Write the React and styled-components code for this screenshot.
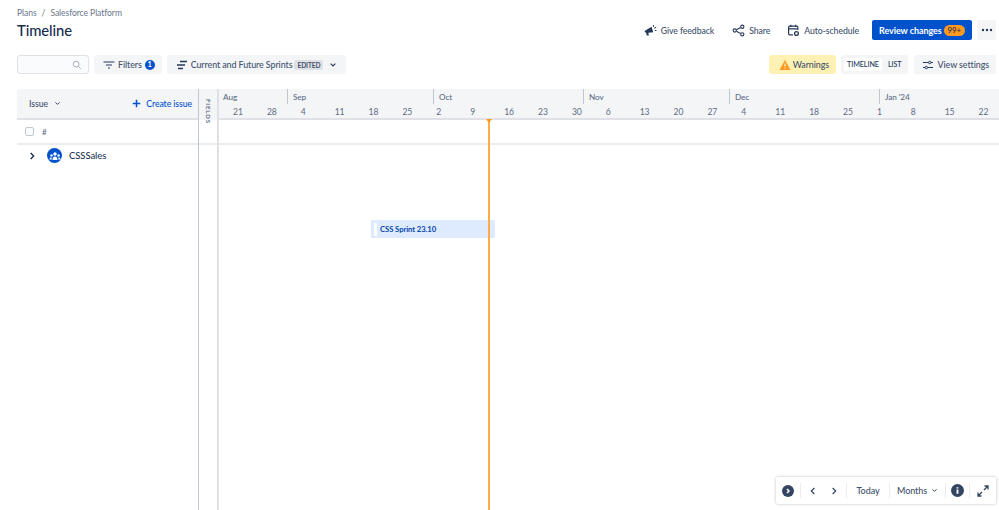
import React from 'react';
import styled, { createGlobalStyle } from 'styled-components';

const Global = createGlobalStyle`
  html, body { margin: 0; padding: 0; height: 100%; overflow: hidden; background: #fff; }
  body { font-family: Lato, "Open Sans", "Liberation Sans", sans-serif; color: #42526e; font-size: 12px; letter-spacing: -0.08px; }
  #root { height: 100%; }
  * { box-sizing: border-box; }
`;

const Page = styled.div`
  position: relative; width: 999px; height: 510px; overflow: hidden;
  display: flex; flex-direction: column; padding-left: 17px;
`;
const Header = styled.header`
  display: flex; justify-content: space-between; align-items: flex-start;
  height: 55px; padding: 7px 3px 0 0;
`;
const TitleBlock = styled.div`display: flex; flex-direction: column;`;
const Crumbs = styled.div`
  font-size: 8.6px; line-height: 13px; color: #6b778c; display: flex; gap: 5px;
`;
const Title = styled.h1`
  margin: 0; font-size: 14.8px; line-height: 21px; font-weight: 500; color: #172b4d;
`;
const Actions = styled.div`display: flex; align-items: center; gap: 5px; margin-top: 13px; height: 20px;`;
const LinkAction = styled.span`
  display: flex; align-items: center; gap: 4px; font-size: 8.7px; color: #42526e; font-weight: 500;
  margin-right: ${p => p.$mr || 0}px; white-space: nowrap;
`;
const Primary = styled.span`
  width: 100px; height: 20px; background: #0052cc; color: #fff; border-radius: 2px; font-size: 9px;
  font-weight: 700; display: flex; align-items: center; justify-content: center; gap: 2px; white-space: nowrap;
`;
const CountPill = styled.span`
  background: #ff991f; color: #172b4d; font-size: 7.8px; font-weight: 500; border-radius: 8px; padding: 0 4px; line-height: 11px;
`;
const MoreButton = styled.span`
  width: 19px; height: 20px; background: #f4f5f7; border-radius: 2px; display: flex; align-items: center; justify-content: center;
`;
const Toolbar = styled.div`
  display: flex; align-items: center; height: 19px; margin-bottom: 15px; padding-right: 3px;
`;
const Search = styled.div`
  width: 72px; height: 19px; border: 1.5px solid #dfe1e6; border-radius: 3px; background: #fafbfc;
  display: flex; align-items: center; justify-content: flex-end; padding-right: 6px; margin-right: 5px;
`;
const ToolButton = styled.span`
  display: flex; align-items: center; height: 19px; background: #f4f5f7; border-radius: 3px;
  font-size: 8.9px; font-weight: 500; color: #42526e; padding: ${p => p.$pad || '0 7px'}; white-space: nowrap;
  margin-right: ${p => p.$mr || 0}px; gap: ${p => p.$gap || 5}px;
`;
const Badge = styled.span`
  width: 10px; height: 10px; border-radius: 50%; background: #0052cc; color: #fff; font-size: 7.5px; font-weight: 700;
  display: flex; align-items: center; justify-content: center;
`;
const Lozenge = styled.span`
  background: #dfe1e6; font-size: 6.6px; font-weight: 700; padding: 0 3px; border-radius: 2px; line-height: 10px; color: #42526e; margin-left: -1px;
`;
const Spacer = styled.div`flex: 1;`;
const WarningButton = styled(ToolButton)`background: #fff0b3; color: #42526e;`;
const Segment = styled.div`
  display: flex; align-items: center; height: 19px; background: #f4f5f7; border-radius: 3px; padding: 0 3px; margin: 0 6px 0 5px;
`;
const SegmentItem = styled.span`
  font-size: 7.2px; font-weight: 500; color: #253858; padding: 0 3px; line-height: 13px;
  border-radius: 2px; background: ${p => p.$active ? '#fff' : 'transparent'}; margin-right: ${p => p.$active ? 3 : 0}px;
`;
const Grid = styled.div`
  flex: 1; display: grid; grid-template-columns: 181px 21px 1fr; grid-template-rows: 31px 25px 1fr; min-height: 0;
`;
const IssueHead = styled.div`
  background: #f4f5f7; border-bottom: 2px solid #dfe1e6; display: flex; align-items: center; padding: 0 6px 0 12px;
  border-radius: 3px 0 0 0; font-size: 8.7px; font-weight: 500;
`;
const IssueLabel = styled.span`display: flex; align-items: center; gap: 6px; flex: 1;`;
const CreateIssue = styled.span`display: flex; align-items: center; gap: 5px; color: #0052cc; font-weight: 500; font-size: 8.7px;`;
const FieldsRail = styled.div`
  grid-row: 1 / span 3; grid-column: 2; border-left: 1px solid #c1c7d0; border-right: 2px solid #dfe1e6;
  background: linear-gradient(#f4f5f7 31px, #fff 31px);
  display: flex; justify-content: center; padding-top: 10px; position: relative;
`;
const RailLabel = styled.span`
  writing-mode: vertical-rl; font-size: 6.2px; letter-spacing: 0.8px; color: #5e6c84; font-weight: 700; line-height: 8px; height: 22px;
`;
const RailRule = styled.div`
  position: absolute; left: 0; right: 0; top: 54px; height: 2px; background: #ebecf0;
`;
const TimelineHead = styled.div`
  background: #f4f5f7; border-bottom: 2px solid #dfe1e6; display: flex; flex-direction: column; overflow: hidden;
`;
const MonthRow = styled.div`display: flex; height: 18px;`;
const Month = styled.div`
  width: ${p => p.$w}px; flex: none; height: 15px; font-size: 8.2px; line-height: 16px; padding-left: ${p => p.$first ? 4 : 5}px; color: #5e6c84;
  border-left: ${p => p.$first ? 'none' : '1px solid #c1c7d0'}; font-weight: 500;
`;
const WeekRow = styled.div`display: flex; padding-left: 14px; height: 11px;`;
const Week = styled.div`
  width: 33.9px; flex: none; font-size: 8.6px; line-height: 11px; color: #5e6c84;
`;
const SubHead = styled.div`
  border-bottom: 2px solid #ebecf0; display: flex; align-items: center; padding-left: 8px; gap: 8px; color: #6b778c; font-size: 8px; font-weight: 600;
`;
const Check = styled.span`width: 9px; height: 9px; border: 1px solid #c1c7d0; border-radius: 2px; background: #fafbfc;`;
const SubHeadPlain = styled.div`border-bottom: 2px solid #ebecf0;`;
const IssueList = styled.div`padding: 2px 0 0 11px; display: flex; align-items: flex-start; grid-column: 1;`;
const ProjectRow = styled.div`display: flex; align-items: center; gap: 8px; font-size: 9.5px; font-weight: 500; color: #253858; height: 17px;`;
const ProjectDot = styled.span`
  width: 15px; height: 15px; border-radius: 50%; background: #0052cc; display: flex; align-items: center; justify-content: center; margin-left: 3px; margin-right: -1px;
`;
const Canvas = styled.div`position: relative;`;
const SprintBar = styled.div`
  position: absolute; left: 152px; top: 75px; width: 124px; height: 18px; background: #deebff; border-radius: 1px;
  display: flex; align-items: center; padding-left: 3px; gap: 3px; font-size: 7.7px; font-weight: 700; color: #0747a6;
`;
const BarHandle = styled.span`width: 3px; height: 13px; background: #fff; border-radius: 1px;`;
const TodayLine = styled.div`
  position: absolute; left: 488px; top: 119px; bottom: 0; width: 2px; background: #ffab4a;
  &::before { content: ''; position: absolute; left: -2px; top: 0; border: 3px solid transparent; border-top: 4px solid #ff991f; }
`;
const FloatBar = styled.div`
  position: absolute; left: 776px; top: 477px; width: 220px; height: 27px; background: #fff; border-radius: 2px;
  box-shadow: 0 0 3px rgba(9,30,66,.3); display: flex; align-items: center;
`;
const FloatItem = styled.div`
  height: 15px; width: ${p => p.$w}px; display: flex; align-items: center; justify-content: center; gap: ${p => p.$gap || 0}px; flex: none;
  border-right: ${p => p.$last ? 'none' : '1px solid #ebecf0'}; font-size: 9px; font-weight: 500; color: #42526e;
`;
const NavPair = styled(FloatItem)`justify-content: space-between; padding: 0 8px;`;
const Caret = styled.span`margin-left: 3px;`;

const Ic = ({ children, w = 12, h = 12 }) => (
  <svg width={w} height={h} viewBox="0 0 24 24" fill="none" style={{ flex: 'none', display: 'block' }}>{children}</svg>
);
const Megaphone = () => <Ic w={13} h={13}><path d="M1 13l13-8 3 10-9 1 1 5H5l-1-5-2-1z" fill="#253858"/><path d="M18 2l-1 3M22 6l-3 2M23 12h-3" stroke="#253858" strokeWidth="2"/></Ic>;
const ShareIc = () => <Ic w={13} h={13}><circle cx="5" cy="12" r="3" stroke="#253858" strokeWidth="2"/><circle cx="19" cy="5" r="3" stroke="#253858" strokeWidth="2"/><circle cx="19" cy="19" r="3" stroke="#253858" strokeWidth="2"/><path d="M8 10.500L16 6.500M8 13.500l8 4" stroke="#253858" strokeWidth="2"/></Ic>;
const CalGear = () => <Ic w={13} h={13}><path d="M11 20H5a2 2 0 0 1-2-2V6a2 2 0 0 1 2-2h13a2 2 0 0 1 2 2v5" stroke="#253858" strokeWidth="2.2"/><path d="M3 9h17M7 1.500v4M16 1.500v4" stroke="#253858" strokeWidth="2.2"/><circle cx="17.500" cy="17.500" r="3.500" stroke="#253858" strokeWidth="2.400"/></Ic>;
const Search2 = () => <Ic w={10} h={10}><circle cx="10" cy="10" r="7" stroke="#97a0af" strokeWidth="2"/><path d="M15 15l6 6" stroke="#97a0af" strokeWidth="2"/></Ic>;
const FilterIc = () => <Ic w={12} h={12}><path d="M1 6h22M6 12h12M10 18h4" stroke="#253858" strokeWidth="2"/></Ic>;
const RoadmapIc = () => <Ic w={12} h={12}><path d="M8 5h14M2 12h16M4 19h10" stroke="#253858" strokeWidth="3"/></Ic>;
const Chevron = ({ c = '#253858', s = 8 }) => <Ic w={s} h={s}><path d="M5 8l7 7 7-7" stroke={c} strokeWidth="3.400"/></Ic>;
const WarnIc = () => <Ic w={12} h={12}><path d="M12 2L23 22H1z" fill="#ff991f"/><path d="M12 9v6M12 17v2" stroke="#fff" strokeWidth="2"/></Ic>;
const SlidersIc = () => <Ic w={12} h={12}><path d="M2 7h11M18 7h4M2 17h4M11 17h11" stroke="#253858" strokeWidth="2"/><circle cx="15.500" cy="7" r="2.500" stroke="#253858" strokeWidth="2"/><circle cx="8.500" cy="17" r="2.500" stroke="#253858" strokeWidth="2"/></Ic>;
const Plus = () => <Ic w={9} h={9}><path d="M12 2v20M2 12h20" stroke="#0052cc" strokeWidth="4"/></Ic>;
const ChevRight = ({ s = 8, c = '#172b4d', w = 4 }) => <Ic w={s} h={s}><path d="M8 3l9 9-9 9" stroke={c} strokeWidth={w}/></Ic>;
const ChevLeft = () => <Ic w={8} h={8}><path d="M16 3l-9 9 9 9" stroke="#344563" strokeWidth="3.600"/></Ic>;
const Team = () => <Ic w={12} h={12}><circle cx="12" cy="8" r="3.500" fill="#fff"/><circle cx="5" cy="11" r="2.500" fill="#fff"/><circle cx="19" cy="11" r="2.500" fill="#fff"/><path d="M7 20c0-5 2.500-7 5-7s5 2 5 7zM1 19c0-3 2-4.500 4-4.500l.500 4.500zM23 19c0-3-2-4.500-4-4.500l-.500 4.500z" fill="#fff"/></Ic>;
const CircleNext = () => <Ic w={12} h={12}><circle cx="12" cy="12" r="12" fill="#344563"/><path d="M10 8l4 4-4 4" stroke="#fff" strokeWidth="3"/></Ic>;
const Info = () => <Ic w={13} h={13}><circle cx="12" cy="12" r="12" fill="#344563"/><path d="M12 10v8M12 6v2.500" stroke="#fff" strokeWidth="3.400"/></Ic>;
const Expand = () => <Ic w={12} h={12}><path d="M14 10l8-8M15 2h7v7M10 14l-8 8M2 15v7h7" stroke="#344563" strokeWidth="2.600"/></Ic>;
const Dots = () => <Ic w={12} h={12}><circle cx="4" cy="12" r="2.400" fill="#253858"/><circle cx="12" cy="12" r="2.400" fill="#253858"/><circle cx="20" cy="12" r="2.400" fill="#253858"/></Ic>;

const months = [['Aug', 68], ['Sep', 146], ['Oct', 150], ['Nov', 146], ['Dec', 150], ["Jan '24", 120]];
const weeks = [21, 28, 4, 11, 18, 25, 2, 9, 16, 23, 30, 6, 13, 20, 27, 4, 11, 18, 25, 1, 8, 15, 22];

export default function App() {
  return (
    <Page>
      <Global />
      <Header>
        <TitleBlock>
          <Crumbs><span>Plans</span><span>/</span><span>Salesforce Platform</span></Crumbs>
          <Title>Timeline</Title>
        </TitleBlock>
        <Actions>
          <LinkAction $mr={13}><Megaphone />Give feedback</LinkAction>
          <LinkAction $mr={12}><ShareIc />Share</LinkAction>
          <LinkAction $mr={8}><CalGear />Auto-schedule</LinkAction>
          <Primary>Review changes <CountPill>99+</CountPill></Primary>
          <MoreButton><Dots /></MoreButton>
        </Actions>
      </Header>
      <Toolbar>
        <Search><Search2 /></Search>
        <ToolButton $mr={5} $pad="0 7px 0 9px" $gap={3}><FilterIc />Filters <Badge>1</Badge></ToolButton>
        <ToolButton $pad="0 9px" $gap={3}><RoadmapIc />Current and Future Sprints <Lozenge>EDITED</Lozenge><Caret><Chevron /></Caret></ToolButton>
        <Spacer />
        <WarningButton $pad="0 7px 0 10px" $gap={2}><WarnIc />Warnings</WarningButton>
        <Segment><SegmentItem $active>TIMELINE</SegmentItem><SegmentItem>LIST</SegmentItem></Segment>
        <ToolButton $pad="0 7px 0 8px" $gap={4}><SlidersIc />View settings</ToolButton>
      </Toolbar>
      <Grid>
        <IssueHead>
          <IssueLabel>Issue <Chevron c="#344563" s={7} /></IssueLabel>
          <CreateIssue><Plus />Create issue</CreateIssue>
        </IssueHead>
        <FieldsRail><RailLabel>FIELDS</RailLabel><RailRule /></FieldsRail>
        <TimelineHead>
          <MonthRow>{months.map(([m, w], i) => <Month key={m} $w={w} $first={i === 0}>{m}</Month>)}</MonthRow>
          <WeekRow>{weeks.map((d, i) => <Week key={i}>{d}</Week>)}</WeekRow>
        </TimelineHead>
        <SubHead><Check />#</SubHead>
        <SubHeadPlain />
        <IssueList>
          <ProjectRow><ChevRight /><ProjectDot><Team /></ProjectDot>CSSSales</ProjectRow>
        </IssueList>
        <Canvas>
          <SprintBar><BarHandle />CSS Sprint 23.10</SprintBar>
        </Canvas>
      </Grid>
      <TodayLine />
      <FloatBar>
        <FloatItem $w={25}><CircleNext /></FloatItem>
        <NavPair $w={46}><ChevLeft /><ChevRight c="#344563" w={3.6} /></NavPair>
        <FloatItem $w={43}>Today</FloatItem>
        <FloatItem $w={56} $gap={4}>Months <Chevron c="#344563" s={7} /></FloatItem>
        <FloatItem $w={24}><Info /></FloatItem>
        <FloatItem $w={26} $last><Expand /></FloatItem>
      </FloatBar>
    </Page>
  );
}
